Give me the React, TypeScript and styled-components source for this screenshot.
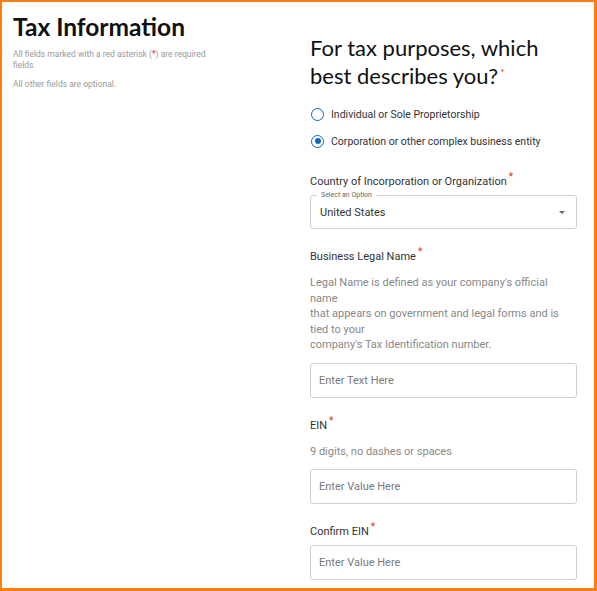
import React, { useState } from 'react';
import styled, { createGlobalStyle } from 'styled-components';

const GlobalStyle = createGlobalStyle`
    html, body {
        margin: 0;
        padding: 0;
        background: #ffffff;
    }
    * {
        box-sizing: border-box;
    }
`;

const Frame = styled.div`
    width: 597px;
    height: 591px;
    border-style: solid;
    border-color: #fb7d14;
    border-width: 2px 3px 3px 2px;
    display: flex;
    overflow: hidden;
    font-family: Roboto, "Liberation Sans", sans-serif;
`;

const Side = styled.div`
    width: 308px;
    padding: 11px 0 0 11px;
`;

const Title = styled.h1`
    margin: 0 0 8px 0;
    font-family: Lato, "Open Sans", sans-serif;
    font-weight: 700;
    font-size: 24.5px;
    line-height: 28px;
    color: #111;
`;

const Note = styled.p`
    margin: 0 0 8px 0;
    max-width: 206px;
    font-size: 8.5px;
    line-height: 11px;
    color: #9a9a9a;
`;

const Red = styled.span`
    color: #d32f2f;
`;

const Main = styled.div`
    width: 267px;
    padding-top: 32px;
    display: flex;
    flex-direction: column;
`;

const Question = styled.h2`
    margin: 0 0 14px 0;
    font-family: Lato, "Open Sans", sans-serif;
    font-weight: 400;
    font-size: 22px;
    line-height: 28px;
    color: #111;
`;

const Star = styled.sup`
    color: #d32f2f;
    font-size: 10px;
    line-height: 0;
    margin-left: 2px;
`;

const RadioRow = styled.label`
    display: flex;
    align-items: center;
    gap: 7px;
    height: 20px;
    margin-bottom: 7px;
    font-size: 10.5px;
    color: #333;
    cursor: pointer;
`;

const RadioDot = styled.span<{ $checked: boolean }>`
    width: 13px;
    height: 13px;
    margin-left: 1px;
    border-radius: 50%;
    border: 1.5px solid #1565c0;
    display: flex;
    align-items: center;
    justify-content: center;
    &::after {
        content: '';
        width: 6px;
        height: 6px;
        border-radius: 50%;
        background: #1565c0;
        display: ${p => (p.$checked ? 'block' : 'none')};
    }
`;

const Field = styled.div<{ $first?: boolean }>`
    margin-top: ${p => (p.$first ? '16px' : '20px')};
    display: flex;
    flex-direction: column;
`;

const Label = styled.div`
    font-size: 11px;
    line-height: 16px;
    color: #333;
    margin-bottom: 5px;
`;

const Hint = styled.div`
    font-size: 11px;
    line-height: 15.5px;
    color: #888;
    max-width: 250px;
    margin: 5px 0 10px 0;
`;

const SelectBox = styled.div`
    position: relative;
    height: 34px;
    border: 1px solid #cfcfcf;
    border-radius: 3px;
    display: flex;
    align-items: center;
    padding: 0 9px;
    font-size: 11px;
    color: #333;
`;

const Legend = styled.span`
    position: absolute;
    top: -5px;
    left: 6px;
    padding: 0 4px;
    background: #fff;
    font-size: 7px;
    line-height: 8px;
    color: #666;
`;

const Caret = styled.span`
    margin-left: auto;
    width: 0;
    height: 0;
    border-left: 3.5px solid transparent;
    border-right: 3.5px solid transparent;
    border-top: 3.5px solid #666;
    margin-right: 2px;
`;

const TextInput = styled.input`
    height: 35px;
    width: 267px;
    border: 1px solid #cfcfcf;
    border-radius: 3px;
    padding: 0 8px;
    font-family: Roboto, "Liberation Sans", sans-serif;
    font-size: 11px;
    color: #333;
    outline: none;
    &::placeholder {
        color: #7a7a7a;
    }
`;

export default function App() {
    const [entity, setEntity] = useState('corp');

    const options = [
        { id: 'individual', label: 'Individual or Sole Proprietorship' },
        { id: 'corp', label: 'Corporation or other complex business entity' },
    ];

    return (
        <>
            <GlobalStyle />
            <Frame>
                <Side>
                    <Title>Tax Information</Title>
                    <Note>All fields marked with a red asterisk (<Red>*</Red>) are required fields.</Note>
                    <Note>All other fields are optional.</Note>
                </Side>
                <Main>
                    <Question>
                        For tax purposes, which best describes you?<Star>*</Star>
                    </Question>
                    {options.map(opt => (
                        <RadioRow key={opt.id} onClick={() => setEntity(opt.id)}>
                            <RadioDot $checked={entity === opt.id} />
                            {opt.label}
                        </RadioRow>
                    ))}
                    <Field $first>
                        <Label>Country of Incorporation or Organization<Star>*</Star></Label>
                        <SelectBox>
                            <Legend>Select an Option</Legend>
                            United States
                            <Caret />
                        </SelectBox>
                    </Field>
                    <Field>
                        <Label>Business Legal Name<Star>*</Star></Label>
                        <Hint>
                            Legal Name is defined as your company's official name<br />
                            that appears on government and legal forms and is tied to your<br />
                            company's Tax Identification number.
                        </Hint>
                        <TextInput placeholder="Enter Text Here" />
                    </Field>
                    <Field>
                        <Label>EIN<Star>*</Star></Label>
                        <Hint>9 digits, no dashes or spaces</Hint>
                        <TextInput placeholder="Enter Value Here" />
                    </Field>
                    <Field>
                        <Label>Confirm EIN<Star>*</Star></Label>
                        <TextInput placeholder="Enter Value Here" />
                    </Field>
                </Main>
            </Frame>
        </>
    );
}
